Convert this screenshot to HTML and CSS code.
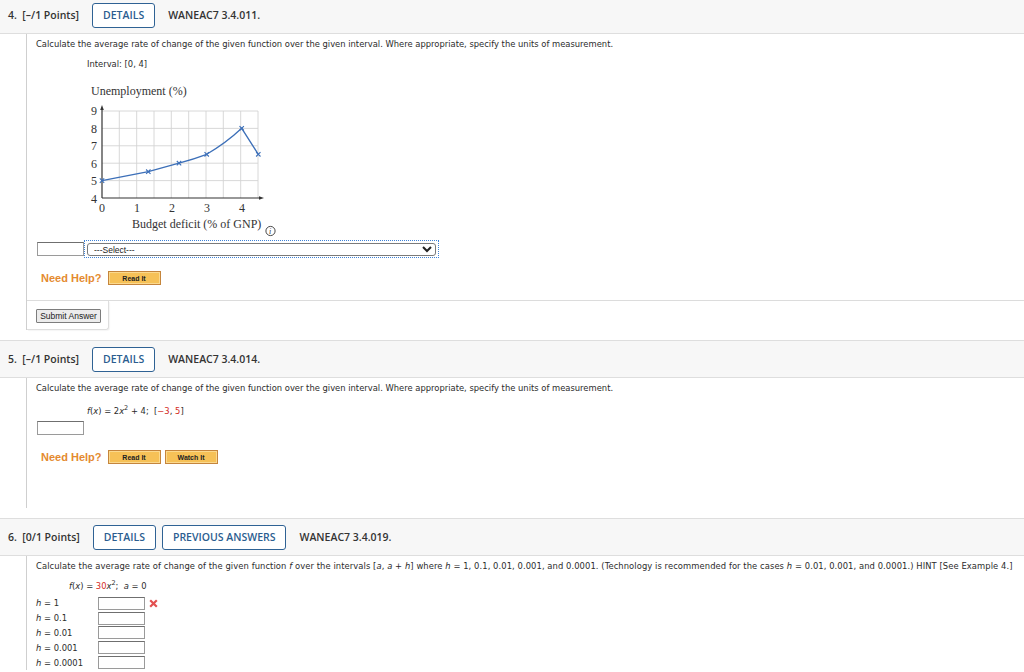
FILE: index.html
```html
<!DOCTYPE html>
<html>
<head>
<meta charset="utf-8">
<link rel="stylesheet" href="styles.css">
</head>
<body>
<div class="q">
  <div class="qhead first">
    <span class="qnum">4.&nbsp; [–/1 Points]</span>
    <span class="hbtn">DETAILS</span>
    <span class="code">WANEAC7 3.4.011.</span>
  </div>
  <div class="qbody">
    <div class="content c1">
      <p class="prompt">Calculate the average rate of change of the given function over the given interval. Where appropriate, specify the units of measurement.</p>
      <p class="prompt indent gap8">Interval: [0, 4]</p>
      <svg class="chart" width="200" height="152" viewBox="86 82 200 152">
        <text class="ct" x="91" y="95">Unemployment (%)</text>
        <g class="grid">
          <line x1="119.3" y1="111" x2="119.3" y2="198"/>
          <line x1="136.7" y1="111" x2="136.7" y2="198"/>
          <line x1="154" y1="111" x2="154" y2="198"/>
          <line x1="171.3" y1="111" x2="171.3" y2="198"/>
          <line x1="188.7" y1="111" x2="188.7" y2="198"/>
          <line x1="206" y1="111" x2="206" y2="198"/>
          <line x1="223.3" y1="111" x2="223.3" y2="198"/>
          <line x1="240.7" y1="111" x2="240.7" y2="198"/>
          <line x1="258" y1="111" x2="258" y2="198"/>
          <line x1="102" y1="111" x2="258" y2="111"/>
          <line x1="102" y1="128.4" x2="258" y2="128.4"/>
          <line x1="102" y1="145.8" x2="258" y2="145.8"/>
          <line x1="102" y1="163.2" x2="258" y2="163.2"/>
          <line x1="102" y1="180.6" x2="258" y2="180.6"/>
        </g>
        <g class="axis">
          <line x1="102" y1="198" x2="102" y2="108"/>
          <line x1="102" y1="198" x2="261" y2="198"/>
        </g>
        <polygon class="arrow" points="102,105 100.2,110 103.8,110"/>
        <polygon class="arrow" points="264,198 259,196.2 259,199.8"/>
        <g class="ct">
          <text x="97" y="115" text-anchor="end">9</text>
          <text x="97" y="132.5" text-anchor="end">8</text>
          <text x="97" y="150" text-anchor="end">7</text>
          <text x="97" y="167.5" text-anchor="end">6</text>
          <text x="97" y="185" text-anchor="end">5</text>
          <text x="97" y="202.5" text-anchor="end">4</text>
          <text x="102" y="212" text-anchor="middle">0</text>
          <text x="137" y="212" text-anchor="middle">1</text>
          <text x="172" y="212" text-anchor="middle">2</text>
          <text x="207" y="212" text-anchor="middle">3</text>
          <text x="242" y="212" text-anchor="middle">4</text>
          <text x="132" y="228">Budget deficit (% of GNP)</text>
        </g>
        <path class="dline" d="M102,180.6 L148.3,171.7 L179,163.2 Q194,159 206.7,154.3 Q226,143 241.7,128.3 L258.3,154.3"/>
        <g class="mk">
          <path d="M99.8,178.4 l4.4,4.4 M104.2,178.4 l-4.4,4.4"/>
          <path d="M146.1,169.5 l4.4,4.4 M150.5,169.5 l-4.4,4.4"/>
          <path d="M176.8,161 l4.4,4.4 M181.2,161 l-4.4,4.4"/>
          <path d="M204.5,152.1 l4.4,4.4 M208.9,152.1 l-4.4,4.4"/>
          <path d="M239.5,126.1 l4.4,4.4 M243.9,126.1 l-4.4,4.4"/>
          <path d="M256.1,152.1 l4.4,4.4 M260.5,152.1 l-4.4,4.4"/>
        </g>
        <circle class="info" cx="270.5" cy="231" r="4.6"/>
        <text class="infoi" x="270.2" y="234">i</text>
      </svg>
      <div class="ansrow">
        <span class="tbox"></span>
        <span class="selwrap"><select class="sel"><option>---Select---</option></select></span>
      </div>
      <div class="help">
        <span class="needhelp">Need Help?</span>
        <span class="hb">Read It</span>
      </div>
    </div>
    <div class="submit-area"><button class="submit">Submit Answer</button></div>
  </div>
</div>

<div class="q">
  <div class="qhead">
    <span class="qnum">5.&nbsp; [–/1 Points]</span>
    <span class="hbtn">DETAILS</span>
    <span class="code">WANEAC7 3.4.014.</span>
  </div>
  <div class="qbody b5">
    <div class="content c5">
      <p class="prompt">Calculate the average rate of change of the given function over the given interval. Where appropriate, specify the units of measurement.</p>
      <p class="math m5">
        <i>f</i>(<i>x</i>) = 2<i>x</i><sup>2</sup> + 4;&nbsp; [<span class="red">−3</span>, <span class="red">5</span>]
      </p>
      <div class="ansrow2"><span class="tbox"></span></div>
      <div class="help">
        <span class="needhelp">Need Help?</span>
        <span class="hb">Read It</span>
        <span class="hb">Watch It</span>
      </div>
    </div>
  </div>
</div>

<div class="q">
  <div class="qhead">
    <span class="qnum">6.&nbsp; [0/1 Points]</span>
    <span class="hbtn">DETAILS</span>
    <span class="hbtn">PREVIOUS ANSWERS</span>
    <span class="code">WANEAC7 3.4.019.</span>
  </div>
  <div class="qbody">
    <div class="content c6">
      <p class="prompt wide">Calculate the average rate of change of the given function <i>f</i> over the intervals [<i>a</i>, <i>a</i> + <i>h</i>] where <i>h</i> = 1, 0.1, 0.01, 0.001, and 0.0001. (Technology is recommended for the cases <i>h</i> = 0.01, 0.001, and 0.0001.) HINT [See Example 4.]</p>
      <p class="math m6"><i>f</i>(<i>x</i>) = <span class="red">30</span><i>x</i><sup>2</sup>;&nbsp; <i>a</i> = 0</p>
      <div class="hrows">
        <div class="hrow"><span class="hl"><i>h</i> = 1</span><span class="tbox sm"></span>
          <svg class="xmark" width="9" height="9" viewBox="0 0 9 9"><path d="M1.2,1.2 L7.8,7.8 M7.8,1.2 L1.2,7.8"/></svg></div>
        <div class="hrow"><span class="hl"><i>h</i> = 0.1</span><span class="tbox sm"></span></div>
        <div class="hrow"><span class="hl"><i>h</i> = 0.01</span><span class="tbox sm"></span></div>
        <div class="hrow"><span class="hl"><i>h</i> = 0.001</span><span class="tbox sm"></span></div>
        <div class="hrow"><span class="hl"><i>h</i> = 0.0001</span><span class="tbox sm"></span></div>
      </div>
    </div>
  </div>
</div>
</body>
</html>
```

FILE: styles.css
```css
html, body {
  margin: 0;
  padding: 0;
  background: #fff;
}
body {
  width: 1024px;
  height: 672px;
  overflow: hidden;
  font-family: "DejaVu Sans", Verdana, sans-serif;
  color: #333;
}
.qhead {
  display: flex;
  align-items: center;
  height: 36px;
  padding-left: 8px;
  background: #f7f7f7;
  border-top: 1px solid #dedede;
  border-bottom: 1px solid #dedede;
  font-family: "Open Sans", sans-serif;
  font-size: 10.5px;
  font-weight: 600;
  color: #333;
}
.qhead.first {
  margin-top: -4px;
}
.qnum {
  margin-right: 13px;
}
.hbtn {
  height: 23px;
  line-height: 23px;
  padding: 0 10px;
  border: 1px solid #2f6294;
  border-radius: 3px;
  background: #fff;
  color: #2b5d8f;
  margin-right: 6px;
}
.code {
  margin-left: 7px;
}
.qbody {
  margin-left: 26px;
  border-left: 1px solid #cfcfcf;
}
.content {
  padding: 4px 0 0 9px;
}
.c1 {
  padding-bottom: 15px;
  border-bottom: 1px solid #dcdcdc;
}
.prompt {
  margin: 0;
  font-size: 8.4px;
  line-height: 12px;
  color: #2b2b2b;
  white-space: nowrap;
}
.prompt.wide {
  letter-spacing: 0.075px;
}
.prompt i, .math i, .hl i {
  font-style: italic;
}
.indent {
  margin-left: 51px;
}
.gap8 {
  margin-top: 8px;
}
.chart {
  display: block;
  margin: 12px 0 0 50px;
  overflow: visible;
}
.ct {
  font-family: "Liberation Serif", "Times New Roman", serif;
  font-size: 12px;
  fill: #333;
}
.grid line {
  stroke: #d4d4d4;
  stroke-width: 0.9;
}
.axis line {
  stroke: #333;
  stroke-width: 1.2;
}
.arrow {
  fill: #333;
}
.dline {
  fill: none;
  stroke: #3c6fb8;
  stroke-width: 1.3;
}
.mk path {
  fill: none;
  stroke: #3c6fb8;
  stroke-width: 1.1;
}
.info {
  fill: none;
  stroke: #333;
  stroke-width: 0.9;
}
.infoi {
  font-family: "Liberation Serif", serif;
  font-style: italic;
  font-size: 8px;
  fill: #333;
  text-anchor: middle;
}
.ansrow {
  display: flex;
  align-items: center;
  margin-top: 6px;
  margin-left: 1px;
  height: 18px;
}
.tbox {
  display: block;
  box-sizing: border-box;
  width: 47px;
  height: 14px;
  border: 1px solid #9a9a9a;
  border-top-color: #6f6f6f;
  background: #fff;
}
.selwrap {
  display: flex;
  align-items: center;
  box-sizing: border-box;
  height: 18px;
  padding: 0 2px;
  border: 1px dotted #3f82d6;
}
.sel {
  box-sizing: border-box;
  width: 349px;
  height: 13px;
  padding: 0 0 0 2px;
  font-family: "Liberation Sans", Arial, sans-serif;
  font-size: 8.5px;
  color: #222;
  border: 1px solid #7a7a7a;
  border-radius: 3px;
  background: #fff;
}
.help {
  display: flex;
  align-items: center;
  gap: 4px;
  margin-top: 13px;
  padding-left: 5px;
  height: 14px;
}
.needhelp {
  font-family: "Liberation Sans", Arial, sans-serif;
  font-weight: bold;
  font-size: 11px;
  color: #e48a30;
  margin-right: 2px;
}
.hb {
  display: flex;
  align-items: center;
  justify-content: center;
  box-sizing: border-box;
  width: 53px;
  height: 14px;
  border: 1px solid #c5853c;
  box-shadow: inset 0 0 0 1px #fbd98e;
  background: #f6c157;
  font-family: "Liberation Sans", Arial, sans-serif;
  font-weight: bold;
  font-size: 7px;
  color: #222;
}
.submit-area {
  width: 82px;
  box-sizing: border-box;
  padding: 8px 0 6px 9px;
  border-right: 1px solid #dedede;
  border-bottom: 1px solid #dedede;
  border-bottom-right-radius: 3px;
  box-shadow: 1px 1px 1px rgba(0,0,0,0.04);
}
.submit {
  display: block;
  box-sizing: border-box;
  width: 65px;
  height: 14px;
  padding: 0;
  font-family: "Liberation Sans", Arial, sans-serif;
  font-size: 8.5px;
  color: #222;
  background: #ececec;
  border: 1px solid #7d7d7d;
  border-radius: 1px;
}
.q + .q {
  margin-top: 10px;
}
.b5 {
  height: 130px;
}
.math {
  margin: 0;
  font-size: 8.4px;
  line-height: 14px;
  white-space: nowrap;
  color: #2b2b2b;
}
.math sup {
  font-size: 6.5px;
  line-height: 0;
  vertical-align: 4px;
}
.m5 {
  margin: 10px 0 0 51px;
}
.m6 {
  margin: 7px 0 0 33px;
}
.red {
  color: #d42b1e;
}
.ansrow2 {
  margin-top: 3px;
  margin-left: 1px;
}
.c5 .help {
  margin-top: 15px;
}
.hrows {
  margin-top: 3px;
}
.hrow {
  display: flex;
  align-items: center;
  height: 14.8px;
  font-size: 8.4px;
  color: #2b2b2b;
}
.hl {
  width: 62px;
  white-space: nowrap;
}
.tbox.sm {
  height: 13px;
}
.xmark {
  margin-left: 4px;
}
.xmark path {
  stroke: #e35050;
  stroke-width: 2.2;
  fill: none;
}
```
